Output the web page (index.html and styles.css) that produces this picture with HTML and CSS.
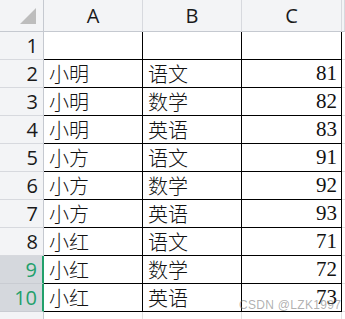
FILE: index.html
```html
<!DOCTYPE html>
<html>
<head>
<meta charset="utf-8">
<link rel="stylesheet" href="styles.css">
</head>
<body>
<div class="sheet">
  <div class="corner hdr"><span class="tri"></span></div>
  <div class="col hdr">A</div>
  <div class="col hdr">B</div>
  <div class="col hdr">C</div>
  <div class="col hdr rest"></div>

  <div class="rh">1</div><div class="c"></div><div class="c"></div><div class="c num"></div><div class="g"></div>
  <div class="rh">2</div><div class="c">小明</div><div class="c">语文</div><div class="c num">81</div><div class="g"></div>
  <div class="rh">3</div><div class="c">小明</div><div class="c">数学</div><div class="c num">82</div><div class="g"></div>
  <div class="rh">4</div><div class="c">小明</div><div class="c">英语</div><div class="c num">83</div><div class="g"></div>
  <div class="rh">5</div><div class="c">小方</div><div class="c">语文</div><div class="c num">91</div><div class="g"></div>
  <div class="rh">6</div><div class="c">小方</div><div class="c">数学</div><div class="c num">92</div><div class="g"></div>
  <div class="rh">7</div><div class="c">小方</div><div class="c">英语</div><div class="c num">93</div><div class="g"></div>
  <div class="rh">8</div><div class="c">小红</div><div class="c">语文</div><div class="c num">71</div><div class="g"></div>
  <div class="rh sel">9</div><div class="c">小红</div><div class="c">数学</div><div class="c num">72</div><div class="g"></div>
  <div class="rh sel">10</div><div class="c">小红</div><div class="c">英语</div><div class="c num">73</div><div class="g"></div>
  <div class="rh">11</div><div class="e"></div><div class="e"></div><div class="e"></div><div class="g"></div>
  <div class="mark">CSDN @LZK1997</div>
</div>
</body>
</html>
```
FILE: styles.css
```css
* { box-sizing: border-box; }
html, body { margin: 0; padding: 0; background: #fff; overflow: hidden; }
.sheet {
  position: relative;
  width: 345px;
  height: 319px;
  display: grid;
  grid-template-columns: 44px 99px 99px 100px 1fr;
  grid-template-rows: 32px repeat(11, 28px);
  font-family: "Noto Sans CJK SC", "Noto Sans", sans-serif;
  overflow: hidden;
}
.hdr {
  background: #f3f4f6;
  border-right: 1px solid #d7d9de;
  border-bottom: 1px solid #c5c9d0;
  font-family: "Open Sans", "Noto Sans", sans-serif;
  font-size: 20px;
  color: #1a1a1a;
  display: flex;
  align-items: center;
  justify-content: center;
}
.corner { position: relative; border-right: 1px solid #c5c9d0; }
.tri {
  position: absolute;
  left: 20px;
  top: 8px;
  width: 0;
  height: 0;
  border-left: 16px solid transparent;
  border-bottom: 16px solid #bdbdbd;
}
.rh {
  background: #f3f4f6;
  border-right: 1px solid #c5c9d0;
  border-bottom: 1px solid #d7d9de;
  font-family: "Open Sans", "Noto Sans", sans-serif;
  font-size: 20px;
  color: #1a1a1a;
  display: flex;
  align-items: center;
  justify-content: flex-end;
  padding-right: 5px;
  line-height: 1;
}
.rh.sel {
  background: #d5d8dd;
  color: #22a06b;
  border-right: 2px solid #22a06b;
  border-bottom-color: #c9ccd2;
}
.c {
  border-right: 1px solid #000;
  border-bottom: 1px solid #000;
  font-size: 20px;
  color: #111;
  display: flex;
  align-items: center;
  padding-left: 5px;
  line-height: 1;
  font-weight: 300;
}
.c.num {
  justify-content: flex-end;
  padding-right: 4px;
  font-family: "Liberation Serif", serif;
  font-weight: 400;
  font-size: 21px;
}
.e { border-right: 1px solid #e1e1e1; border-bottom: 1px solid #e1e1e1; }
.g { border-bottom: 1px solid #e1e1e1; }
.mark {
  position: absolute;
  left: 239px;
  top: 298px;
  font-family: "Liberation Sans", Arial, sans-serif;
  font-size: 12px;
  color: rgba(110, 110, 110, 0.55);
  letter-spacing: 0.3px;
}
```
